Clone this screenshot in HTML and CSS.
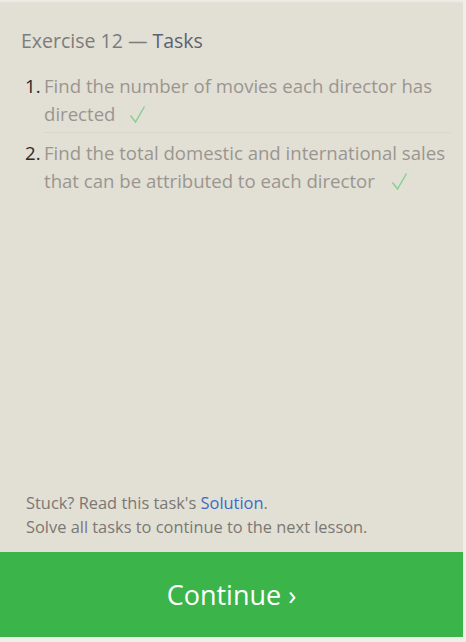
FILE: index.html
```html
<!DOCTYPE html>
<html>
<head>
<meta charset="utf-8">
<link rel="stylesheet" href="styles.css">
</head>
<body>
<div class="panel">
  <div class="content">
    <h2 class="title">Exercise 12 — <span class="title-strong">Tasks</span></h2>
    <ol class="tasks">
      <li class="task"><span class="num">1.</span><span class="text">Find the number of movies each director has directed<svg class="check" width="17" height="19" viewBox="0 0 17 19"><path d="M1.5 10.5 L6.5 17 L15.5 1.5" fill="none" stroke="#85cf92" stroke-width="1.4"/></svg></span></li>
      <li class="task"><span class="num">2.</span><span class="text">Find the total domestic and international sales that can be attributed to each director<svg class="check check-2" width="17" height="19" viewBox="0 0 17 19"><path d="M1.5 10.5 L6.5 17 L15.5 1.5" fill="none" stroke="#85cf92" stroke-width="1.4"/></svg></span></li>
    </ol>
  </div>
  <div class="help">
    <p>Stuck? Read this task's <a class="link" href="#">Solution</a>.</p>
    <p>Solve all tasks to continue to the next lesson.</p>
  </div>
  <div class="continue">Continue ›</div>
</div>
</body>
</html>
```
FILE: styles.css
```css
html, body {
  margin: 0;
  padding: 0;
}
body {
  background: #f0eee8;
  width: 466px;
  height: 642px;
  overflow: hidden;
  font-family: "Open Sans", "Noto Sans", sans-serif;
}
.panel {
  width: 463px;
  height: 637px;
  background: #e2dfd5;
  box-shadow: inset 0 3px 2px -1px #eeece6;
  display: flex;
  flex-direction: column;
}
.content {
  flex: 1;
  padding: 27px 12px 0 21px;
}
.title {
  margin: 0;
  font-weight: 400;
  font-size: 19.5px;
  line-height: 28px;
  color: #7c7c7c;
}
.title-strong {
  color: #5b6270;
}
.tasks {
  list-style: none;
  margin: 17px 0 0;
  padding: 0;
}
.task {
  display: flex;
  font-size: 18.6px;
  line-height: 28px;
  padding-bottom: 4px;
}
.task + .task {
  border-top: 1px solid #d9d6cc;
  margin-left: 23px;
  padding-top: 6px;
}
.task + .task .num {
  margin-left: -23px;
}
.num {
  width: 19px;
  flex: none;
  color: #2a2a2a;
  padding-left: 4px;
}
.text {
  color: #9a968f;
}
.check {
  margin-left: 14px;
  vertical-align: -3px;
}
.check-2 {
  margin-left: 16px;
}
.help {
  padding: 0 20px 13px 26px;
  font-size: 16.4px;
  line-height: 24px;
  color: #7a7873;
}
.help p {
  margin: 0;
}
.link {
  color: #3d6ac4;
  text-decoration: none;
}
.continue {
  height: 85px;
  background: #3bb54a;
  color: #fff;
  font-size: 27px;
  display: flex;
  align-items: center;
  justify-content: center;
}
```
